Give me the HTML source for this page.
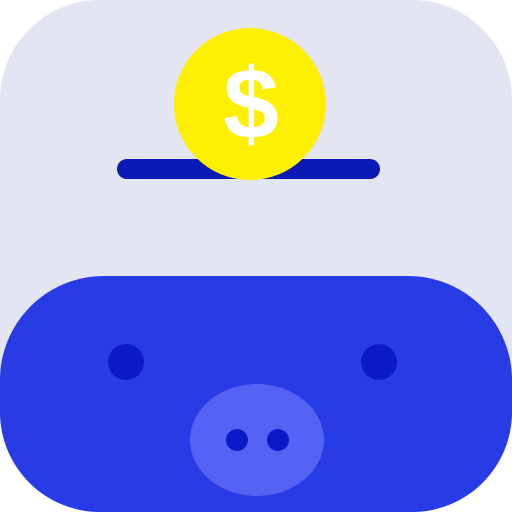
<!DOCTYPE html>
<html><head><meta charset="utf-8"><style>
html,body{margin:0;padding:0;background:#fff;width:512px;height:512px;overflow:hidden;}
svg{display:block;}
</style></head><body>
<svg width="512" height="512" viewBox="0 0 512 512" xmlns="http://www.w3.org/2000/svg">
<rect x="0" y="0" width="512" height="512" rx="100" ry="100" fill="#E3E4F4"/>
<path d="M104 276 H408 A104 104 0 0 1 512 380 V412 A100 100 0 0 1 412 512 H100 A100 100 0 0 1 0 412 V380 A104 104 0 0 1 104 276 Z" fill="#283CE6"/>
<line x1="127" y1="169" x2="370" y2="169" stroke="#0A1AB4" stroke-width="20" stroke-linecap="round"/>
<circle cx="250" cy="104" r="76" fill="#FFEF00"/>
<text x="251" y="138" text-anchor="middle" font-family="Liberation Sans, sans-serif" font-weight="bold" font-size="100" fill="#fff">$</text>
<circle cx="126" cy="362" r="18" fill="#0A1AC8"/>
<circle cx="379" cy="362" r="18" fill="#0A1AC8"/>
<ellipse cx="257" cy="440" rx="67" ry="56" fill="#5462F4"/>
<circle cx="237" cy="440" r="11" fill="#0A1AC8"/>
<circle cx="278" cy="440" r="11" fill="#0A1AC8"/>
</svg>
</body></html>
